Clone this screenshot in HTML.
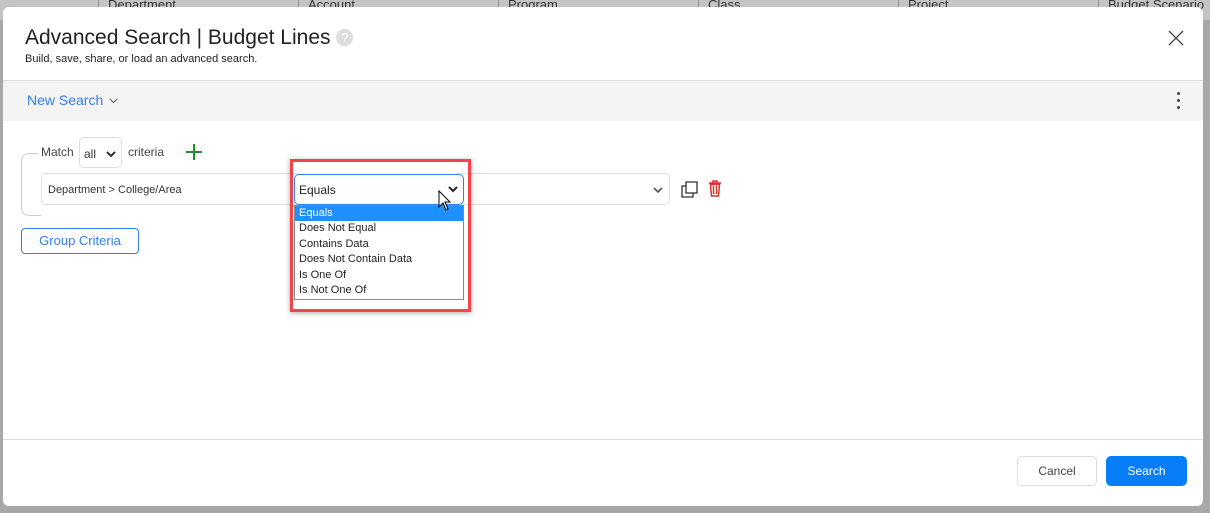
<!DOCTYPE html>
<html><head><style>
*{box-sizing:border-box;margin:0;padding:0}
body{width:1210px;height:513px;background:#a8a8a8;font-family:"Liberation Sans",sans-serif;position:relative;overflow:hidden}
.top{position:absolute;left:0;top:0;width:1210px;height:20px;background:#c4c4c4;color:#333;font-size:13px}
.top span{position:absolute;top:-3px}
.top i{position:absolute;top:0;width:1px;height:8px;background:#999}
.modal{position:absolute;left:3px;top:7px;width:1200px;height:499px;background:#fff;border-radius:6px;overflow:hidden}
.abs{position:absolute}
h1{position:absolute;left:22px;top:19px;font-size:21px;font-weight:normal;color:#222}
.sub{left:22px;top:46px;font-size:11px;color:#222}
.bar{left:0;top:73px;width:1200px;height:41px;background:#f4f4f4;border-top:1px solid #ddd}
.sel{border:1px solid #ddd;border-radius:5px;background:#fff;font-size:11px;color:#333}
.dd div{height:15.4px;padding-left:4px;font-size:11px;line-height:15px;color:#222}
</style></head><body>
<div class="top">
<i style="left:98px"></i><span style="left:108px">Department</span>
<i style="left:298px"></i><span style="left:308px">Account</span>
<i style="left:498px"></i><span style="left:508px">Program</span>
<i style="left:698px"></i><span style="left:708px">Class</span>
<i style="left:898px"></i><span style="left:908px">Project</span>
<i style="left:1098px"></i><span style="left:1108px">Budget Scenario</span>
</div>
<div class="modal">
<h1>Advanced Search | Budget Lines <span style="display:inline-block;width:17px;height:17px;border-radius:50%;background:#ddd;color:#fff;font-size:13px;text-align:center;line-height:17px;vertical-align:2px">?</span></h1>
<div class="abs sub">Build, save, share, or load an advanced search.</div>
<svg class="abs" style="left:1165px;top:23px" width="16" height="16"><path d="M1 1L15 15M15 1L1 15" stroke="#444" stroke-width="1.3"/></svg>
<div class="abs bar">
<div class="abs" style="left:24px;top:11px;font-size:14px;color:#2f7ff0">New Search <svg width="9" height="6" style="vertical-align:1px;margin-left:2px"><path d="M1 1L4.5 4.5L8 1" fill="none" stroke="#666" stroke-width="1.2"/></svg></div>
<div class="abs" style="left:1174px;top:11px;width:3px;height:18px">
<div style="width:3px;height:3px;border-radius:50%;background:#444;margin-bottom:4px"></div><div style="width:3px;height:3px;border-radius:50%;background:#444;margin-bottom:4px"></div><div style="width:3px;height:3px;border-radius:50%;background:#444"></div></div>
</div>
<div class="abs" style="left:18px;top:146px;width:20px;height:63px;border:1px solid #ccc;border-right:none;border-radius:8px 0 0 8px"></div>
<div class="abs" style="left:36px;top:138px;font-size:12px;color:#444;background:#fff;padding:0 2px">Match</div>
<div class="abs sel" style="left:76px;top:130px;width:43px;height:31px;padding:9px 0 0 4px;font-size:12px">all <svg style="position:absolute;right:5px;top:13px" width="10" height="7"><path d="M1 1L5 5L9 1" fill="none" stroke="#333" stroke-width="2"/></svg></div>
<div class="abs" style="left:125px;top:138px;font-size:12px;color:#444">criteria</div>
<svg class="abs" style="left:183px;top:137px" width="16" height="16"><path d="M8 0V16M0 8H16" stroke="#1f8a2e" stroke-width="2"/></svg>
<div class="abs sel" style="left:38px;top:166px;width:260px;height:32px;padding:10px 0 0 6px">Department &gt; College/Area</div>
<div class="abs sel" style="left:450px;top:166px;width:217px;height:32px"><svg style="position:absolute;right:6px;top:13px" width="10" height="7"><path d="M1 1L5 5L9 1" fill="none" stroke="#555" stroke-width="1.6"/></svg></div>
<svg class="abs" style="left:678px;top:174px" width="17" height="17"><rect x="5" y="1" width="11" height="11" fill="#fff" stroke="#333" stroke-width="1.3"/><path d="M5 5H1V16H12V12" fill="none" stroke="#333" stroke-width="1.3"/></svg>
<svg class="abs" style="left:705px;top:173px" width="14" height="17"><path d="M1 3H13M5 3V1H9V3M2.5 4.5L3.5 16H10.5L11.5 4.5Z M5.5 6V14M8.5 6V14" fill="none" stroke="#d9342b" stroke-width="1.5"/></svg>
<div class="abs" style="left:18px;top:221px;width:118px;height:26px;border:1px solid #2f7ff0;border-radius:4px;color:#2f7ff0;font-size:13px;text-align:center;line-height:24px">Group Criteria</div>
<div class="abs" style="left:287px;top:152px;width:181px;height:153px;border:3px solid #f0464b;box-shadow:0 1px 5px rgba(0,0,0,.35)"></div>
<div class="abs" style="left:291px;top:167px;width:170px;height:31px;border:1px solid #2f7ff0;border-radius:5px;background:#fff;font-size:12px;padding:8px 0 0 4px;color:#222">Equals<svg style="position:absolute;right:5px;top:11px" width="10" height="7"><path d="M1 1L5 5L9 1" fill="none" stroke="#222" stroke-width="2"/></svg></div>
<div class="abs dd" style="left:291px;top:198px;width:170px;height:95px;border:1px solid #888;background:#fff">
<div style="background:#1e90ff;color:#fff">Equals</div><div>Does Not Equal</div><div>Contains Data</div><div>Does Not Contain Data</div><div>Is One Of</div><div>Is Not One Of</div></div>
<svg class="abs" style="left:435px;top:183px" width="14" height="22"><path d="M1 1V17L5 13L8 20L10 19L7 12H12Z" fill="#fff" stroke="#000" stroke-width="1"/></svg>
<div class="abs" style="left:0;top:432px;width:1200px;height:1px;background:#ddd"></div>
<div class="abs" style="left:1014px;top:449px;width:80px;height:30px;border:1px solid #ddd;border-radius:5px;font-size:12px;color:#444;text-align:center;line-height:28px">Cancel</div>
<div class="abs" style="left:1103px;top:449px;width:81px;height:30px;background:#077df8;border-radius:5px;font-size:12px;color:#fff;text-align:center;line-height:30px">Search</div>
</div>
</body></html>
